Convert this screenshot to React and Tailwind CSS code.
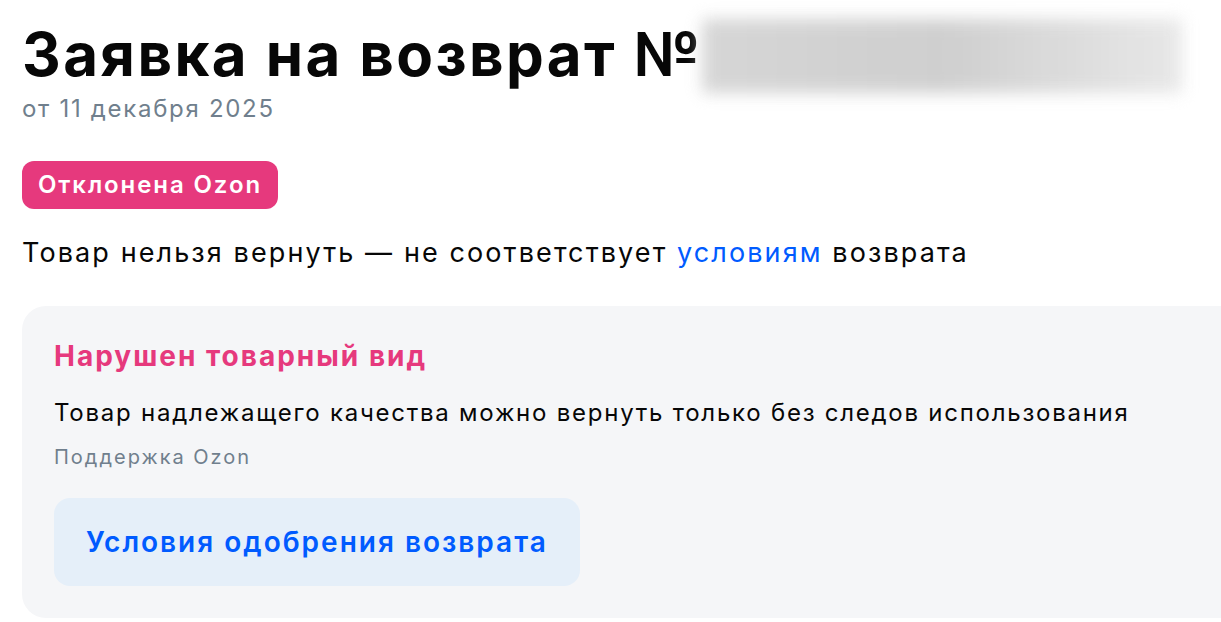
import React from 'react';

const ReturnRequest = () => {
  return (
    <div className="w-[1221px] h-[622px] overflow-hidden bg-white font-['Inter','Noto_Sans',sans-serif] text-[#070707]">
      <div className="pl-[22px] pt-[14px]">
        <div className="flex items-center">
          <h1 className="text-[60px] leading-[80px] font-bold tracking-[2.4px] whitespace-nowrap">Заявка на возврат №</h1>
          <div className="mt-[4px] w-[480px] h-[74px] bg-gradient-to-r from-[#d2d2d2] via-[#cacaca] to-[#e6e6e6] opacity-90 blur-[8px]"></div>
        </div>
        <div className="text-[24px] leading-[30px] text-[#707f8d] tracking-[1.7px]">от 11 декабря 2025</div>

        <div className="mt-[37px] inline-flex items-center h-[48px] px-[16px] rounded-[12px] bg-[#e6397d] text-white text-[24px] font-semibold tracking-[1.9px]">
          Отклонена Ozon
        </div>

        <p className="mt-[24px] text-[27px] leading-[40px] tracking-[2.1px] whitespace-nowrap">
          Товар нельзя вернуть — не соответствует <span className="text-[#005bff]">условиям</span> возврата
        </p>

        <div className="mt-[33px] w-[1240px] h-[312px] rounded-[24px] bg-[#f5f6f8] pl-[32px] pt-[30px]">
          <h2 className="text-[28px] leading-[40px] font-bold text-[#e6397d] tracking-[2px]">Нарушен товарный вид</h2>
          <p className="mt-[21px] text-[24px] leading-[32px] tracking-[1.75px] whitespace-nowrap">Товар надлежащего качества можно вернуть только без следов использования</p>
          <p className="mt-[14px] text-[20px] leading-[28px] text-[#707f8d] tracking-[2px]">Поддержка Ozon</p>
          <button className="mt-[27px] h-[88px] px-[32px] rounded-[16px] bg-[#e5eff9] text-[#005bff] text-[28px] font-semibold tracking-[2px]">
            Условия одобрения возврата
          </button>
        </div>
      </div>
    </div>
  );
};

export default ReturnRequest;
